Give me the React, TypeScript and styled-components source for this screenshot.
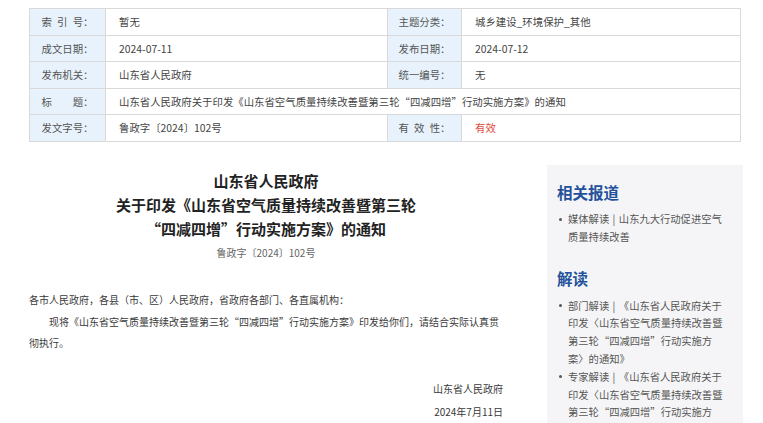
import React from "react";
import styled, { createGlobalStyle } from "styled-components";

const GlobalStyle = createGlobalStyle`
  html, body { margin: 0; padding: 0; background: #fff; }
  body {
    font-family: "Noto Sans CJK SC", "Noto Sans", sans-serif;
    color: #333;
  }
`;

const Page = styled.div`
  width: 763px;
  height: 423px;
  overflow: hidden;
  box-sizing: border-box;
  padding: 8px 0 0 29px;
`;

const InfoTable = styled.div`
  width: 712px;
  box-sizing: border-box;
  display: grid;
  grid-template-columns: 75px 281px 73px 1fr;
  grid-auto-rows: 25.5px;
  gap: 1px;
  background: #d9d9d9;
  border: 1px solid #d9d9d9;
  font-size: 10.4px;
`;

const Label = styled.div`
  background: #e7f2fc;
  color: #555;
  display: flex;
  align-items: center;
  justify-content: center;
  white-space: pre;
`;

const Value = styled.div<{ $span?: number; $red?: boolean }>`
  background: #fff;
  color: ${(p) => (p.$red ? "#e04a3c" : "#444")};
  display: flex;
  align-items: center;
  padding-left: 13px;
  white-space: nowrap;
  ${(p) => (p.$span ? `grid-column: span ${p.$span};` : "")}
`;

const Lower = styled.div`
  display: flex;
  align-items: flex-start;
  margin-top: 23.5px;
`;

const Main = styled.div`
  width: 474px;
  padding-top: 4px;
`;

const Title = styled.h1`
  margin: 0;
  font-size: 15px;
  line-height: 24px;
  font-weight: 700;
  color: #222;
  text-align: center;
`;

const DocNo = styled.div`
  font-size: 10px;
  line-height: 24px;
  color: #666;
  text-align: center;
`;

const Body = styled.div`
  margin-top: 24px;
  font-size: 10px;
  line-height: 21.5px;
  color: #3a3a3a;
`;

const Para = styled.p<{ $indent?: boolean }>`
  margin: 0;
  text-indent: ${(p) => (p.$indent ? "2em" : "0")};
`;

const Signature = styled.div`
  margin-top: 23.5px;
  font-size: 10px;
  line-height: 23px;
  color: #3a3a3a;
  text-align: right;
`;

const Side = styled.aside`
  margin-left: 44px;
  width: 196px;
  min-height: 300px;
  box-sizing: border-box;
  background: #f5f5f7;
  padding: 16px 16px 0 10px;
`;

const SideHeading = styled.h2<{ $gap?: number }>`
  margin: ${(p) => p.$gap ?? 0}px 0 0 0;
  font-size: 15.5px;
  line-height: 22px;
  font-weight: 700;
  color: #23529a;
`;

const LinkList = styled.ul<{ $gap: number }>`
  list-style: none;
  margin: ${(p) => p.$gap}px 0 0 0;
  padding: 0;
  font-size: 10.3px;
  line-height: 17.8px;
  color: #555;
`;

const LinkItem = styled.li`
  display: flex;
  align-items: flex-start;
`;

const Dot = styled.span`
  flex: none;
  width: 3px;
  height: 3px;
  border-radius: 50%;
  background: #555;
  margin: 7.5px 6px 0 2px;
`;

const LinkText = styled.span`
  flex: 1;
`;

const SEP = "\u2004|\u2004";

const rows: [string, string, string, string][] = [
  ["索\u2002引\u2002号：", "暂无", "主题分类：", "城乡建设_环境保护_其他"],
  ["成文日期：", "2024-07-11", "发布日期：", "2024-07-12"],
  ["发布机关：", "山东省人民政府", "统一编号：", "无"],
];

export default function App() {
  return (
    <>
      <GlobalStyle />
      <Page>
        <InfoTable>
          {rows.map((r) => (
            <React.Fragment key={r[0]}>
              <Label>{r[0]}</Label>
              <Value>{r[1]}</Value>
              <Label>{r[2]}</Label>
              <Value>{r[3]}</Value>
            </React.Fragment>
          ))}
          <Label>{"标\u3000\u3000题："}</Label>
          <Value $span={3}>
            山东省人民政府关于印发《山东省空气质量持续改善暨第三轮“四减四增”行动实施方案》的通知
          </Value>
          <Label>发文字号：</Label>
          <Value>鲁政字〔2024〕102号</Value>
          <Label>{"有\u2002效\u2002性："}</Label>
          <Value $red>有效</Value>
        </InfoTable>

        <Lower>
          <Main>
            <Title>
              山东省人民政府
              <br />
              关于印发《山东省空气质量持续改善暨第三轮
              <br />
              “四减四增”行动实施方案》的通知
            </Title>
            <DocNo>鲁政字〔2024〕102号</DocNo>
            <Body>
              <Para>各市人民政府，各县（市、区）人民政府，省政府各部门、各直属机构：</Para>
              <Para $indent>
                现将《山东省空气质量持续改善暨第三轮“四减四增”行动实施方案》印发给你们，请结合实际认真贯彻执行。
              </Para>
            </Body>
            <Signature>
              山东省人民政府
              <br />
              2024年7月11日
            </Signature>
          </Main>

          <Side>
            <SideHeading>相关报道</SideHeading>
            <LinkList $gap={7}>
              <LinkItem>
                <Dot />
                <LinkText>{`媒体解读${SEP}山东九大行动促进空气质量持续改善`}</LinkText>
              </LinkItem>
            </LinkList>
            <SideHeading $gap={21}>解读</SideHeading>
            <LinkList $gap={8}>
              <LinkItem>
                <Dot />
                <LinkText>
                  {`部门解读${SEP}《山东省人民政府关于印发〈山东省空气质量持续改善暨第三轮“四减四增”行动实施方案〉的通知》`}
                </LinkText>
              </LinkItem>
              <LinkItem>
                <Dot />
                <LinkText>
                  {`专家解读${SEP}《山东省人民政府关于印发〈山东省空气质量持续改善暨第三轮“四减四增”行动实施方案〉的通知》`}
                </LinkText>
              </LinkItem>
            </LinkList>
          </Side>
        </Lower>
      </Page>
    </>
  );
}
